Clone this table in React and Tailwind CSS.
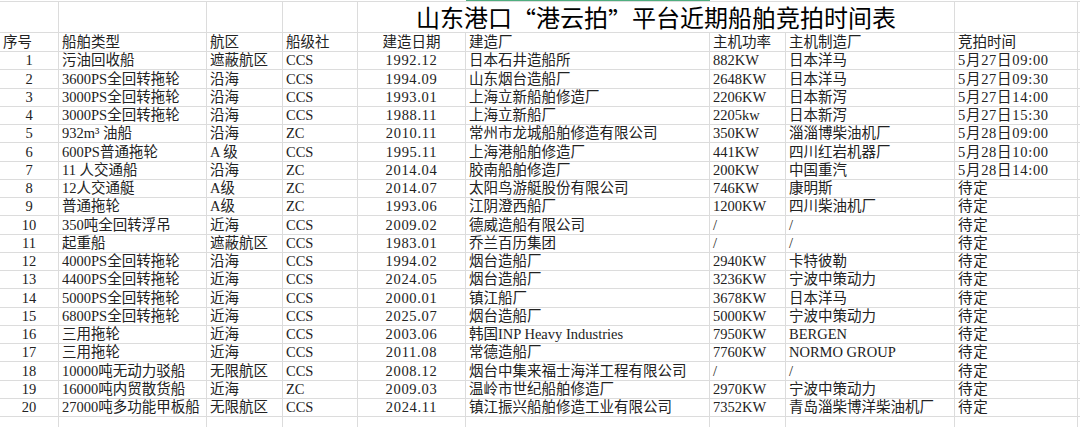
import React from "react";

// column template shared by every row of the sheet
const cols =
  "grid grid-cols-[59px_148px_76px_75px_108px_244px_76px_169px_123px_1fr]";

const headers = [
  "序号",
  "船舶类型",
  "航区",
  "船级社",
  "建造日期",
  "建造厂",
  "主机功率",
  "主机制造厂",
  "竞拍时间",
];

const rows = [
  ["1", "污油回收船", "遮蔽航区", "CCS", "1992.12", "日本石井造船所", "882KW", "日本洋马", "5月27日09:00"],
  ["2", "3600PS全回转拖轮", "沿海", "CCS", "1994.09", "山东烟台造船厂", "2648KW", "日本洋马", "5月27日09:30"],
  ["3", "3000PS全回转拖轮", "沿海", "CCS", "1993.01", "上海立新船舶修造厂", "2206KW", "日本新泻", "5月27日14:00"],
  ["4", "3000PS全回转拖轮", "沿海", "CCS", "1988.11", "上海立新船厂", "2205kw", "日本新泻", "5月27日15:30"],
  ["5", "932m³ 油船", "沿海", "ZC", "2010.11", "常州市龙城船舶修造有限公司", "350KW", "淄淄博柴油机厂", "5月28日09:00"],
  ["6", "600PS普通拖轮", "A 级", "CCS", "1995.11", "上海港船舶修造厂", "441KW", "四川红岩机器厂", "5月28日10:00"],
  ["7", "11 人交通船", "沿海", "ZC", "2014.04", "胶南船舶修造厂", "200KW", "中国重汽", "5月28日14:00"],
  ["8", "12人交通艇", "A级", "ZC", "2014.07", "太阳鸟游艇股份有限公司", "746KW", "康明斯", "待定"],
  ["9", "普通拖轮", "A级", "ZC", "1993.06", "江阴澄西船厂", "1200KW", "四川柴油机厂", "待定"],
  ["10", "350吨全回转浮吊", "近海", "CCS", "2009.02", "德威造船有限公司", "/", "/", "待定"],
  ["11", "起重船", "遮蔽航区", "CCS", "1983.01", "乔兰百历集团", "/", "/", "待定"],
  ["12", "4000PS全回转拖轮", "沿海", "CCS", "1994.02", "烟台造船厂", "2940KW", "卡特彼勒", "待定"],
  ["13", "4400PS全回转拖轮", "近海", "CCS", "2024.05", "烟台造船厂", "3236KW", "宁波中策动力", "待定"],
  ["14", "5000PS全回转拖轮", "近海", "CCS", "2000.01", "镇江船厂", "3678KW", "日本洋马", "待定"],
  ["15", "6800PS全回转拖轮", "近海", "CCS", "2025.07", "烟台造船厂", "5000KW", "宁波中策动力", "待定"],
  ["16", "三用拖轮", "近海", "CCS", "2003.06", "韩国INP Heavy Industries", "7950KW", "BERGEN", "待定"],
  ["17", "三用拖轮", "近海", "CCS", "2011.08", "常德造船厂", "7760KW", "NORMO GROUP", "待定"],
  ["18", "10000吨无动力驳船", "无限航区", "CCS", "2008.12", "烟台中集来福士海洋工程有限公司", "/", "/", "待定"],
  ["19", "16000吨内贸散货船", "近海", "ZC", "2009.03", "温岭市世纪船舶修造厂", "2970KW", "宁波中策动力", "待定"],
  ["20", "27000吨多功能甲板船", "无限航区", "CCS", "2024.11", "镇江振兴船舶修造工业有限公司", "7352KW", "青岛淄柴博洋柴油机厂", "待定"],
];

function Cell({ children, center, last, wide }) {
  return (
    <div
      className={`flex items-center border-b border-[#dcdcdc] px-[3px] whitespace-nowrap ${
        last ? "" : "border-r"
      } ${center ? "justify-center" : "justify-start"} ${
        wide ? "tracking-[0.7px]" : ""
      }`}
    >
      {children}
    </div>
  );
}

export default function App() {
  return (
    <div className="w-[1080px] h-[427px] overflow-hidden bg-white text-[14.5px] leading-none text-[#222] font-['Liberation_Serif','Noto_Sans_CJK_SC',serif]">
      {/* selected-cell edge along the top */}
      <div className={`${cols} h-px`}>
        <div className="col-start-6 bg-[#4fae7f]" />
      </div>

      {/* title row */}
      <div className={`${cols} h-[32px] border-t border-[#dcdcdc]`}>
        <Cell />
        <Cell />
        <Cell />
        <Cell />
        <div className="col-span-4 flex items-center justify-center border-b border-r border-[#dcdcdc] pt-[4px] text-[24px] text-black">
          山东港口
          <span className="font-['Noto_Sans_CJK_SC',sans-serif]">“</span>
          港云拍
          <span className="font-['Noto_Sans_CJK_SC',sans-serif]">”</span>
          平台近期船舶竞拍时间表
        </div>
        <Cell />
        <Cell last />
      </div>

      {/* header row */}
      <div className={`${cols} h-[19px]`}>
        {headers.map((h, i) => (
          <Cell key={h} center={i === 4}>
            {h}
          </Cell>
        ))}
        <Cell last />
      </div>

      {rows.map((r) => (
        <div key={r[0]} className={`${cols} h-[18.25px]`}>
          {r.map((v, i) => (
            <Cell key={i} center={i === 0 || i === 4} wide={i === 4 || i === 8}>
              {v}
            </Cell>
          ))}
          <Cell last />
        </div>
      ))}

      <div className={`${cols} h-[12px]`}>
        {headers.map((h) => (
          <Cell key={h} />
        ))}
        <Cell last />
      </div>
    </div>
  );
}
